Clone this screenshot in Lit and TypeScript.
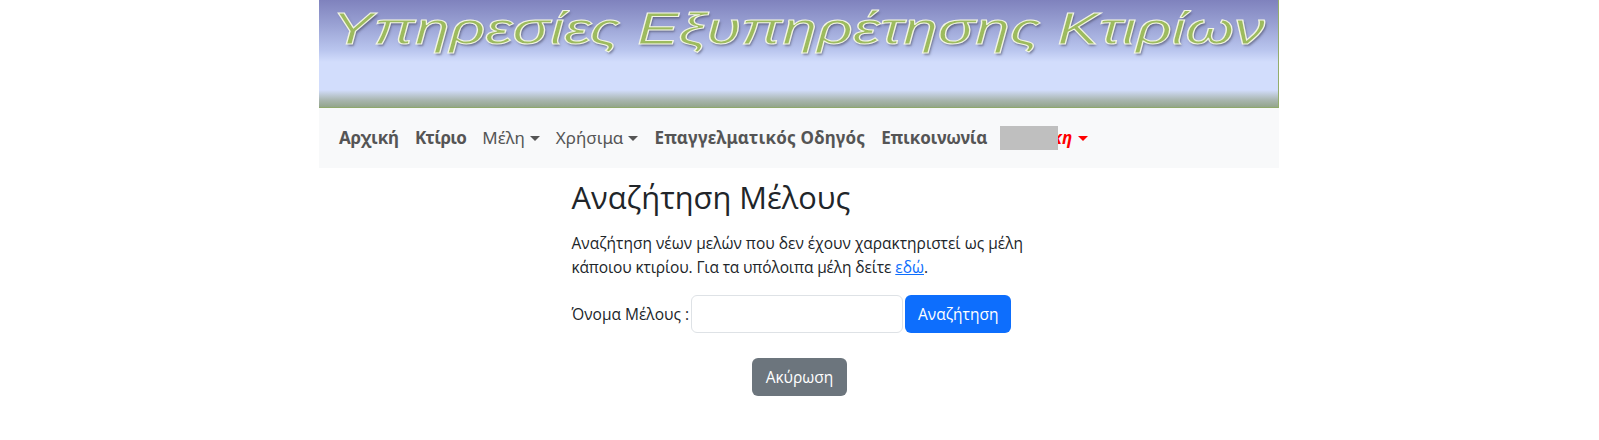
import { LitElement, html, css } from "lit";
import { customElement } from "lit/decorators.js";

@customElement("app-root")
export class AppRoot extends LitElement {
  static styles = css`
    :host {
      display: block;
      background: #fff;
      color: #212529;
      font-family: "Open Sans", "Noto Sans", sans-serif;
      font-size: 15.5px;
      line-height: 24px;
    }
    .top {
      width: 960px;
      margin-left: calc(50% - 480.5px);
    }
    .banner {
      box-sizing: border-box;
      height: 108px;
      border-right: 1px solid #93ad6c;
      border-bottom: 1px solid #8fa86c;
      background: linear-gradient(
        #7f82bd 0,
        #9aa2d4 25px,
        #b9c5ee 50px,
        #d2ddfc 62px,
        #d2ddfc 90px,
        #a9b6b0 100px,
        #93a58b 107px
      );
      padding-top: 3px;
      overflow: hidden;
    }
    .banner-title {
      display: block;
      white-space: nowrap;
      text-align: center;
      font-family: "Liberation Sans", sans-serif;
      font-style: italic;
      font-size: 45px;
      line-height: 52px;
      color: #9dbb5e;
      -webkit-text-stroke: 1px #f2f5e4;
      text-shadow: 1px 2px 2px rgba(60, 60, 80, 0.55);
      transform: scaleX(1.383);
    }
    nav {
      height: 60px;
      box-sizing: border-box;
      background: #f8f9fa;
      display: flex;
      align-items: center;
      padding: 0 12px;
      font-family: "Noto Sans", sans-serif;
      font-size: 17px;
      color: #555;
    }
    nav a {
      padding: 0 8px;
      white-space: nowrap;
      font-weight: 700;
      letter-spacing: 0.2px;
    }
    nav a.plain {
      font-weight: 400;
      letter-spacing: 0;
    }
    nav a.narrow {
      letter-spacing: -0.15px;
    }
    nav a.tight {
      letter-spacing: -0.6px;
    }
    .caret::after {
      content: "";
      display: inline-block;
      margin-left: 5px;
      vertical-align: 3px;
      border-top: 5px solid currentColor;
      border-left: 5px solid transparent;
      border-right: 5px solid transparent;
    }
    nav a.user {
      display: flex;
      align-items: center;
      margin-left: -3px;
      color: #f00;
      font-style: italic;
    }
    .redacted {
      position: relative;
      width: 58px;
      height: 24px;
      background: #bfbfbf;
    }
    .name {
      margin-left: -6px;
    }
    main {
      width: 480px;
      box-sizing: border-box;
      margin: 0 auto;
      padding: 9px 12px 0;
    }
    h1 {
      margin: 0 0 14px;
      font-size: 30.8px;
      line-height: 40px;
      font-weight: 400;
    }
    p {
      margin: 0 0 16px;
    }
    p a {
      color: #0d6efd;
      text-decoration: underline;
    }
    .second-line {
      letter-spacing: -0.14px;
    }
    form {
      display: flex;
      align-items: center;
      gap: 2px;
      white-space: nowrap;
    }
    input {
      box-sizing: border-box;
      width: 212px;
      height: 38px;
      border: 1px solid #dee2e6;
      border-radius: 6px;
      background: #fff;
    }
    button {
      height: 38px;
      padding: 0 13px;
      border: 0;
      border-radius: 6px;
      color: #fff;
      font: inherit;
    }
    .primary {
      background: #0d6efd;
    }
    .secondary {
      padding: 0 13.5px;
      background: #6c757d;
    }
    .actions {
      display: flex;
      justify-content: center;
      margin-top: 25px;
    }
  `;

  render() {
    return html`
      <div class="top">
        <div class="banner">
          <span class="banner-title">Υπηρεσίες Εξυπηρέτησης Κτιρίων</span>
        </div>
        <nav>
          <a class="narrow">Αρχική</a>
          <a class="tight">Κτίριο</a>
          <a class="plain caret">Μέλη</a>
          <a class="plain caret">Χρήσιμα</a>
          <a>Επαγγελματικός Οδηγός</a>
          <a class="narrow">Επικοινωνία</a>
          <a class="user caret"><span class="redacted"></span><span class="name">κη</span></a>
        </nav>
      </div>
      <main>
        <h1>Αναζήτηση Μέλους</h1>
        <p>
          Αναζήτηση νέων μελών που δεν έχουν χαρακτηριστεί ως μέλη
          <span class="second-line">κάποιου κτιρίου. Για τα υπόλοιπα μέλη δείτε</span>
          <a href="#">εδώ</a>.
        </p>
        <form @submit=${(e: Event) => e.preventDefault()}>
          <label for="member">Όνομα Μέλους :</label>
          <input id="member" type="text" />
          <button class="primary">Αναζήτηση</button>
        </form>
        <div class="actions">
          <button class="secondary" type="button">Ακύρωση</button>
        </div>
      </main>
    `;
  }
}
